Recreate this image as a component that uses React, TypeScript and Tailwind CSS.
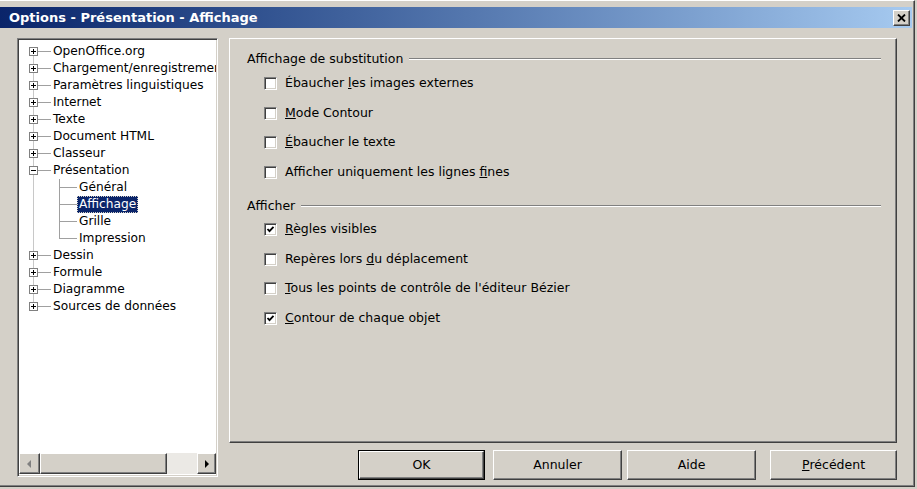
import React from 'react'

const raised =
  'border-t border-l border-t-white border-l-white border-r border-b border-r-[#404040] border-b-[#404040] shadow-[inset_-1px_-1px_0_#808080]'

type TreeItem = { label: string; level: 0 | 1; sign?: '+' | '-'; selected?: boolean; last?: boolean; lastChild?: boolean }

const tree: TreeItem[] = [
  { label: 'OpenOffice.org', level: 0, sign: '+' },
  { label: 'Chargement/enregistrement', level: 0, sign: '+' },
  { label: 'Paramètres linguistiques', level: 0, sign: '+' },
  { label: 'Internet', level: 0, sign: '+' },
  { label: 'Texte', level: 0, sign: '+' },
  { label: 'Document HTML', level: 0, sign: '+' },
  { label: 'Classeur', level: 0, sign: '+' },
  { label: 'Présentation', level: 0, sign: '-' },
  { label: 'Général', level: 1 },
  { label: 'Affichage', level: 1, selected: true },
  { label: 'Grille', level: 1 },
  { label: 'Impression', level: 1, lastChild: true },
  { label: 'Dessin', level: 0, sign: '+' },
  { label: 'Formule', level: 0, sign: '+' },
  { label: 'Diagramme', level: 0, sign: '+' },
  { label: 'Sources de données', level: 0, sign: '+', last: true },
]

function ExpandBox({ sign }: { sign: '+' | '-' }) {
  return (
    <span className="absolute left-[10px] top-[4px] w-[9px] h-[9px] bg-white border border-[#808080] flex items-center justify-center">
      <svg width="7" height="7" viewBox="0 0 7 7">
        <line x1="1" y1="3.5" x2="6" y2="3.5" stroke="#000" strokeWidth="1" />
        {sign === '+' && <line x1="3.5" y1="1" x2="3.5" y2="6" stroke="#000" strokeWidth="1" />}
      </svg>
    </span>
  )
}

function TreeRow({ item, index }: { item: TreeItem; index: number }) {
  const first = index === 0
  return (
    <div className="flex items-center h-[17px] whitespace-nowrap">
      {item.level === 0 ? (
        <div className="relative w-[32px] h-full shrink-0">
          <span
            className={`absolute left-[14px] w-px bg-[#c8c8c8] ${first ? 'top-[8px]' : 'top-0'} ${item.last ? 'h-[9px]' : 'bottom-0'}`}
          />
          <span className="absolute left-[14px] right-0 top-[8px] h-px bg-[#a0a0a0]" />
          {item.sign && <ExpandBox sign={item.sign} />}
        </div>
      ) : (
        <div className="relative w-[58px] h-full shrink-0">
          <span className="absolute left-[14px] top-0 bottom-0 w-px bg-[#c8c8c8]" />
          <span className={`absolute left-[40px] top-0 w-px bg-[#a0a0a0] ${item.lastChild ? 'h-[9px]' : 'bottom-0'}`} />
          <span className="absolute left-[40px] right-0 top-[8px] h-px bg-[#a0a0a0]" />
        </div>
      )}
      <span
        className={`px-[2px] leading-[17px] ${
          item.selected ? 'bg-[#0a246a] text-white outline outline-1 outline-dotted outline-[#d4d0c8] -outline-offset-1' : 'text-black'
        }`}
      >
        {item.label}
      </span>
    </div>
  )
}

function Checkbox({ checked }: { checked?: boolean }) {
  return (
    <span className="w-[13px] h-[13px] shrink-0 bg-white border-t border-l border-t-[#808080] border-l-[#808080] border-r border-b border-r-white border-b-white shadow-[inset_1px_1px_0_#404040,inset_-1px_-1px_0_#d4d0c8] flex items-center justify-center">
      {checked && (
        <svg width="9" height="9" viewBox="0 0 9 9">
          <polyline points="1.5,4 3.5,6.2 7.5,1.8" fill="none" stroke="#000" strokeWidth="1.8" />
        </svg>
      )}
    </span>
  )
}

function Option({ checked, children }: { checked?: boolean; children: React.ReactNode }) {
  return (
    <div className="flex items-center h-[29.5px] pl-[17px] gap-[8px]">
      <Checkbox checked={checked} />
      <span className="text-black whitespace-nowrap">{children}</span>
    </div>
  )
}

function GroupHeader({ title }: { title: string }) {
  return (
    <div className="flex items-center h-[16px] pr-[15px]">
      <span className="text-black whitespace-nowrap">{title}</span>
      <span className="flex-1 ml-[6px] h-[2px] border-t border-t-[#808080] border-b border-b-white" />
    </div>
  )
}

function Button({ label, className, isDefault }: { label: React.ReactNode; className: string; isDefault?: boolean }) {
  return (
    <div className={`${className} h-[30px] ${isDefault ? 'border border-black' : ''}`}>
      <div className={`h-full flex items-center justify-center bg-[#d4d0c8] text-black ${raised}`}>{label}</div>
    </div>
  )
}

export default function App() {
  return (
    <div className="w-[917px] h-[489px] bg-[#d4d0c8] overflow-hidden font-['DejaVu_Sans',sans-serif]">
      <div className="w-[915px] h-[487px] flex flex-col border-r border-b border-r-[#404040] border-b-[#404040] shadow-[inset_-1px_-1px_0_#808080] border-t border-t-white">
        {/* Title bar */}
        <div className="mt-[6px] mr-[2px] h-[21px] flex items-center bg-gradient-to-r from-[#0a246a] to-[#a6caf0]">
          <span className="pl-[9px] text-white font-bold text-[13px]">Options - Présentation - Affichage</span>
          <div className={`ml-auto mr-[2px] w-[17px] h-[16px] bg-[#d4d0c8] flex items-center justify-center ${raised}`}>
            <svg width="9" height="8" viewBox="0 0 9 8">
              <path d="M1 0.5 L8 7.5 M8 0.5 L1 7.5" stroke="#000" strokeWidth="1.8" />
            </svg>
          </div>
        </div>

        <div className="flex mt-[10px]">
          {/* Tree */}
          <div className="ml-[17px] w-[201px] h-[439px] flex flex-col bg-white border-t border-l border-t-[#808080] border-l-[#808080] border-r border-b border-r-white border-b-white shadow-[inset_1px_1px_0_#404040,inset_-1px_-1px_0_#d4d0c8] p-[1px]">
            <div className="flex-1 overflow-hidden pt-[3px] text-[12.2px]">
              {tree.map((item, i) => (
                <TreeRow key={item.label} item={item} index={i} />
              ))}
            </div>
            <div className="h-[21px] flex mb-[1px]">
              <div className={`w-[21px] h-full bg-[#d4d0c8] flex items-center justify-center ${raised}`}>
                <svg width="5" height="8" viewBox="0 0 5 8">
                  <path d="M4 0 L0 4 L4 8 Z" fill="#808080" />
                </svg>
              </div>
              <div className={`w-[127px] h-full bg-[#d4d0c8] ${raised}`} />
              <div className="flex-1 h-full bg-[#ebe9e5]" />
              <div className={`w-[19px] h-full bg-[#d4d0c8] flex items-center justify-center ${raised}`}>
                <svg width="5" height="8" viewBox="0 0 5 8">
                  <path d="M1 0 L5 4 L1 8 Z" fill="#000" />
                </svg>
              </div>
            </div>
          </div>

          {/* Right column */}
          <div className="ml-[11px] w-[668px] flex flex-col text-[12.5px]">
            <div className={`h-[405px] bg-[#d4d0c8] pl-[17px] pt-[12px] ${raised}`}>
              <GroupHeader title="Affichage de substitution" />
              <div className="mt-[2px]">
                <Option>
                  Ébaucher <u>l</u>es images externes
                </Option>
                <Option>
                  <u>M</u>ode Contour
                </Option>
                <Option>
                  <u>É</u>baucher le texte
                </Option>
                <Option>
                  Afficher uniquement les lignes <u>f</u>ines
                </Option>
              </div>
              <div className="mt-[11px]">
                <GroupHeader title="Afficher" />
              </div>
              <div className="mt-[1px]">
                <Option checked>
                  <u>R</u>ègles visibles
                </Option>
                <Option>
                  Repères lors <u>d</u>u déplacement
                </Option>
                <Option>
                  <u>T</u>ous les points de contrôle de l'éditeur Bézier
                </Option>
                <Option checked>
                  <u>C</u>ontour de chaque objet
                </Option>
              </div>
            </div>

            <div className="flex mt-[7px]">
              <Button label="OK" className="ml-[129px] w-[127px]" isDefault />
              <Button label="Annuler" className="ml-[8px] w-[129px]" />
              <Button label="Aide" className="ml-[5px] w-[129px]" />
              <Button
                label={
                  <>
                    <u>P</u>récédent
                  </>
                }
                className="ml-[14px] w-[127px]"
              />
            </div>
          </div>
        </div>
      </div>
    </div>
  )
}
